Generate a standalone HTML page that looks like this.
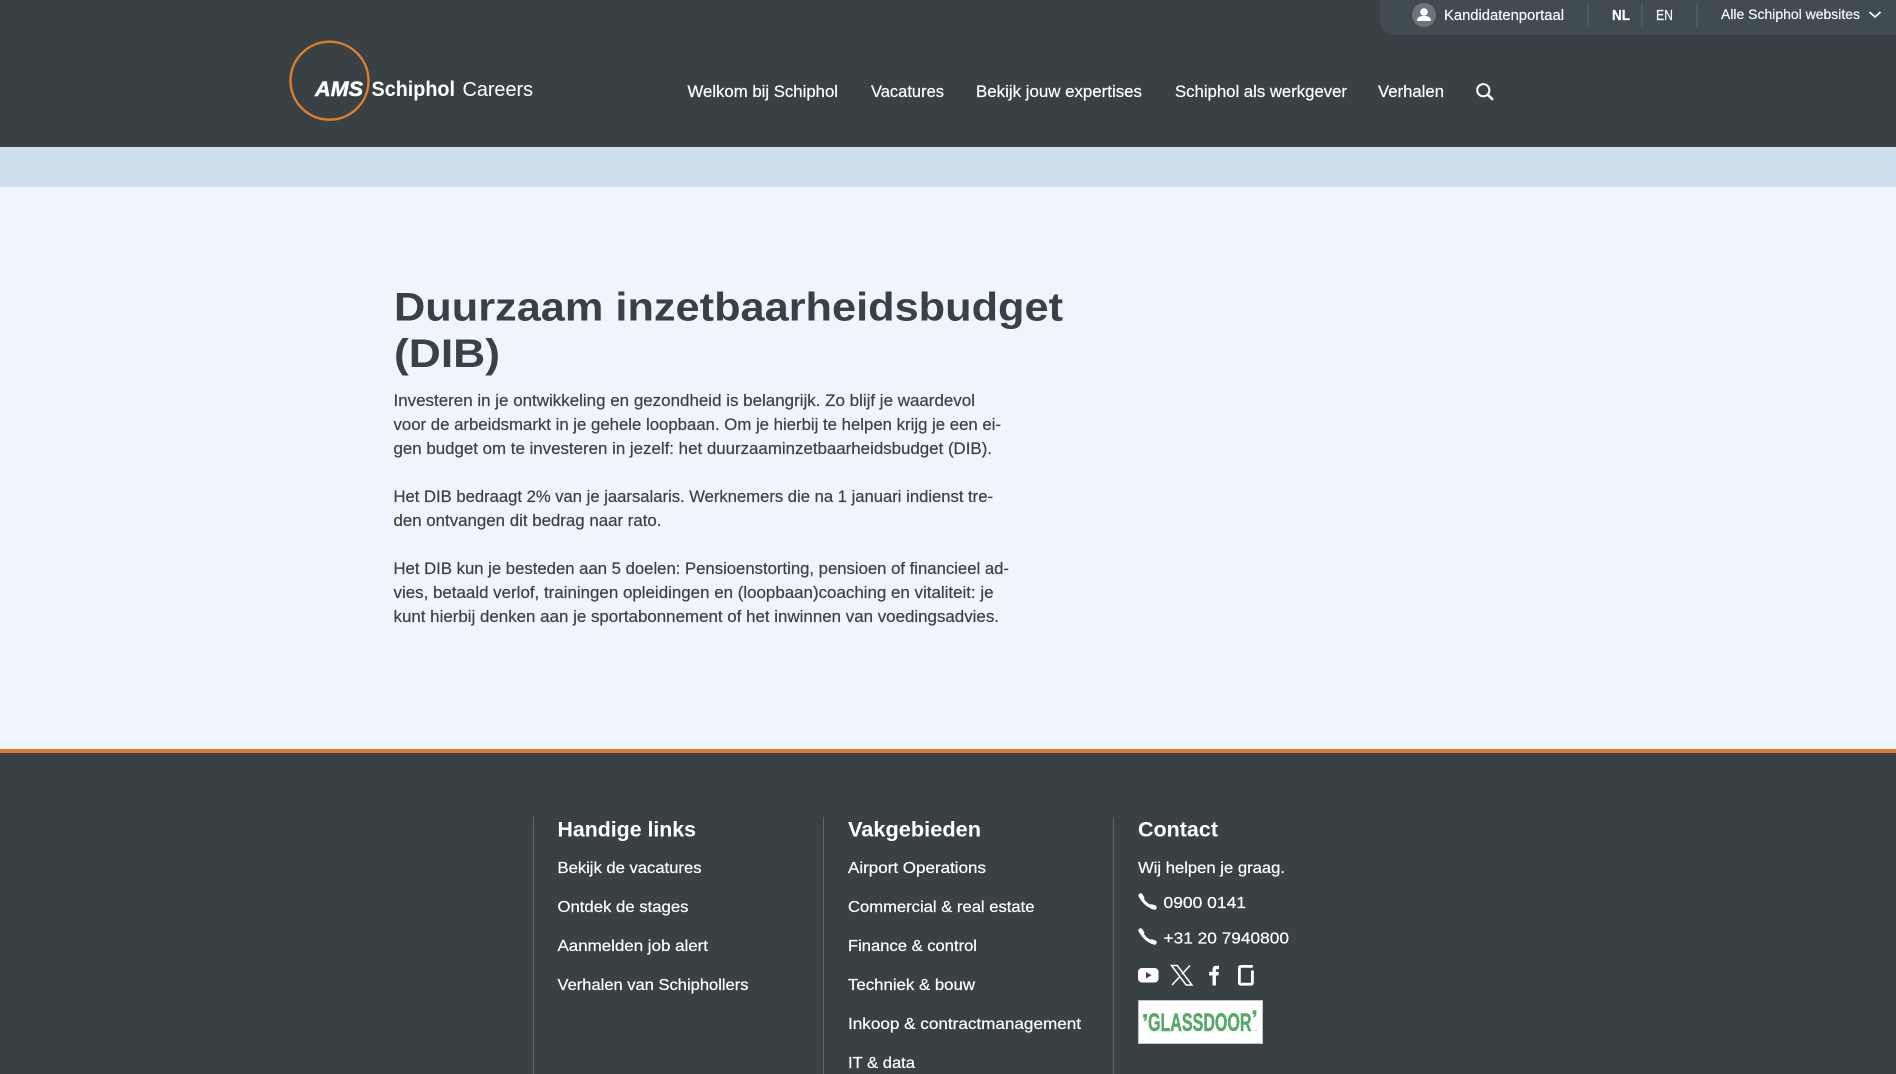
<!DOCTYPE html>
<html lang="nl">
<head>
<meta charset="utf-8">
<title>Duurzaam inzetbaarheidsbudget (DIB) - Schiphol Careers</title>
<style>
html,body{margin:0;padding:0;width:1896px;height:1074px;overflow:hidden;background:#f0f5fc}
body{position:relative;font-family:"Liberation Sans",sans-serif}
.b{position:absolute;left:0;width:1896px}
svg.o{position:absolute;left:0;top:0}
text{font-family:"Liberation Sans",sans-serif}
.n{font-size:16.5px;fill:#fff;stroke:#fff;stroke-width:.2px}
.t{font-size:14.5px;fill:#fff;stroke:#fff;stroke-width:.15px}
.p{font-size:16.5px;fill:#394145;stroke:#394145;stroke-width:.2px}
.h{font-size:40px;font-weight:700;fill:#394145}
.f{font-size:16px;fill:#fff;stroke:#fff;stroke-width:.2px}
.ft{font-size:21px;font-weight:700;fill:#fff}
</style>
</head>
<body>
<div class="b" style="top:0;height:147px;background:#394145"></div>
<div class="b" style="top:147px;height:40px;background:#cfdfee"></div>
<div class="b" style="top:749px;height:4px;background:#dd7e2e"></div>
<div class="b" style="top:753px;height:321px;background:#394145"></div>
<div style="position:absolute;left:1380px;top:0;width:516px;height:35px;background:#414c52;border-bottom-left-radius:14px"></div>

<svg class="o" width="1896" height="1074" viewBox="0 0 1896 1074" xmlns="http://www.w3.org/2000/svg">
  <!-- top bar -->
  <circle cx="1424" cy="15" r="12" fill="#6b7478"/>
  <circle cx="1424" cy="12" r="3.8" fill="#fff"/>
  <path d="M1417 21c0-4 3-5 7-5s7 1 7 5z" fill="#fff"/>
  <text class="t" x="1444" y="20" textLength="120" lengthAdjust="spacingAndGlyphs">Kandidatenportaal</text>
  <path d="M1588 3v24M1642 3v24M1697 3v24" stroke="#5c676c" stroke-width="1"/>
  <text class="t" x="1612" y="20" textLength="18" lengthAdjust="spacingAndGlyphs" style="font-weight:700">NL</text>
  <text class="t" x="1656" y="20" textLength="17" lengthAdjust="spacingAndGlyphs" style="font-size:15px">EN</text>
  <text class="t" x="1721" y="19" style="font-size:14px" textLength="139" lengthAdjust="spacingAndGlyphs">Alle Schiphol websites</text>
  <path d="M1869.5 12l5.5 5 5.5-5" fill="none" stroke="#fff" stroke-width="1.7"/>

  <!-- logo -->
  <circle cx="329.5" cy="80.7" r="39" fill="none" stroke="#dd7e2e" stroke-width="2.4"/>
  <text x="315" y="96" textLength="48" lengthAdjust="spacingAndGlyphs" style="font-size:21px;font-weight:700;font-style:italic;fill:#fff;stroke:#fff;stroke-width:.5px">AMS</text>
  <text x="371.5" y="96" textLength="83.5" lengthAdjust="spacingAndGlyphs" style="font-size:21px;font-weight:700;fill:#fff">Schiphol</text>
  <text x="462.5" y="96" textLength="70.5" lengthAdjust="spacingAndGlyphs" style="font-size:20.5px;fill:#fff">Careers</text>

  <!-- nav -->
  <text class="n" x="687.5" y="97" textLength="150.5" lengthAdjust="spacingAndGlyphs">Welkom bij Schiphol</text>
  <text class="n" x="871" y="97" textLength="73" lengthAdjust="spacingAndGlyphs">Vacatures</text>
  <text class="n" x="976" y="97" textLength="166" lengthAdjust="spacingAndGlyphs">Bekijk jouw expertises</text>
  <text class="n" x="1175" y="97" textLength="172" lengthAdjust="spacingAndGlyphs">Schiphol als werkgever</text>
  <text class="n" x="1378" y="97" textLength="66" lengthAdjust="spacingAndGlyphs">Verhalen</text>
  <circle cx="1483.3" cy="90.2" r="6.1" fill="none" stroke="#fff" stroke-width="2"/>
  <path d="M1487.8 94.8l4.4 4.2" stroke="#fff" stroke-width="2.6" stroke-linecap="round"/>

  <!-- main -->
  <text class="h" x="394" y="320.5" textLength="669" lengthAdjust="spacingAndGlyphs">Duurzaam inzetbaarheidsbudget</text>
  <text class="h" x="394" y="367" textLength="106" lengthAdjust="spacingAndGlyphs">(DIB)</text>

  <text class="p" x="393.5" y="406" textLength="581.5" lengthAdjust="spacingAndGlyphs">Investeren in je ontwikkeling en gezondheid is belangrijk. Zo blijf je waardevol</text>
  <text class="p" x="393.5" y="430" textLength="607.5" lengthAdjust="spacingAndGlyphs">voor de arbeidsmarkt in je gehele loopbaan. Om je hierbij te helpen krijg je een ei-</text>
  <text class="p" x="393.5" y="454" textLength="598.5" lengthAdjust="spacingAndGlyphs">gen budget om te investeren in jezelf: het duurzaaminzetbaarheidsbudget (DIB).</text>

  <text class="p" x="393.5" y="502" textLength="599.5" lengthAdjust="spacingAndGlyphs">Het DIB bedraagt 2% van je jaarsalaris. Werknemers die na 1 januari indienst tre-</text>
  <text class="p" x="393.5" y="526" textLength="268" lengthAdjust="spacingAndGlyphs">den ontvangen dit bedrag naar rato.</text>

  <text class="p" x="393.5" y="574" textLength="615.5" lengthAdjust="spacingAndGlyphs">Het DIB kun je besteden aan 5 doelen: Pensioenstorting, pensioen of financieel ad-</text>
  <text class="p" x="393.5" y="598" textLength="600" lengthAdjust="spacingAndGlyphs">vies, betaald verlof, trainingen opleidingen en (loopbaan)coaching en vitaliteit: je</text>
  <text class="p" x="393.5" y="622" textLength="605.5" lengthAdjust="spacingAndGlyphs">kunt hierbij denken aan je sportabonnement of het inwinnen van voedingsadvies.</text>

  <!-- footer -->
  <path d="M533.5 817v257M823.5 817v257M1113.5 817v257" stroke="#5c676c" stroke-width="1"/>
  <text class="ft" x="557.5" y="836.5" textLength="138.5" lengthAdjust="spacingAndGlyphs">Handige links</text>
  <text class="ft" x="848" y="836.5" textLength="133" lengthAdjust="spacingAndGlyphs">Vakgebieden</text>
  <text class="ft" x="1138" y="836.5" textLength="80" lengthAdjust="spacingAndGlyphs">Contact</text>

  <text class="f" x="557.5" y="873" textLength="144" lengthAdjust="spacingAndGlyphs">Bekijk de vacatures</text>
  <text class="f" x="557.5" y="912" textLength="131" lengthAdjust="spacingAndGlyphs">Ontdek de stages</text>
  <text class="f" x="557.5" y="951" textLength="150.5" lengthAdjust="spacingAndGlyphs">Aanmelden job alert</text>
  <text class="f" x="557.5" y="990" textLength="191" lengthAdjust="spacingAndGlyphs">Verhalen van Schiphollers</text>

  <text class="f" x="848" y="873" textLength="138" lengthAdjust="spacingAndGlyphs">Airport Operations</text>
  <text class="f" x="848" y="912" textLength="186.5" lengthAdjust="spacingAndGlyphs">Commercial &amp; real estate</text>
  <text class="f" x="848" y="951" textLength="129" lengthAdjust="spacingAndGlyphs">Finance &amp; control</text>
  <text class="f" x="848" y="990" textLength="127" lengthAdjust="spacingAndGlyphs">Techniek &amp; bouw</text>
  <text class="f" x="848" y="1029" textLength="233" lengthAdjust="spacingAndGlyphs">Inkoop &amp; contractmanagement</text>
  <text class="f" x="848" y="1068" textLength="67" lengthAdjust="spacingAndGlyphs">IT &amp; data</text>

  <text class="f" x="1138" y="873" textLength="147" lengthAdjust="spacingAndGlyphs">Wij helpen je graag.</text>
  <g fill="none" stroke="#fff" stroke-linecap="round">
    <path d="M1141 896.5c1.5 4.5 6 9 11 10.5" stroke-width="3"/>
    <path d="M1140.6 895.5l1.6 2.6M1151.5 906.5l3 1" stroke-width="4.4"/>
    <path d="M1141 931.5c1.5 4.5 6 9 11 10.5" stroke-width="3"/>
    <path d="M1140.6 930.5l1.6 2.6M1151.5 941.5l3 1" stroke-width="4.4"/>
  </g>
  <text class="f" x="1163.5" y="908" textLength="82.5" lengthAdjust="spacingAndGlyphs">0900 0141</text>
  <text class="f" x="1163.5" y="943.5" textLength="125.5" lengthAdjust="spacingAndGlyphs">+31 20 7940800</text>

  <!-- social -->
  <rect x="1138" y="968" width="20.5" height="14.5" rx="4" fill="#fff"/>
  <path d="M1146 972l5.5 3.2-5.5 3.2z" fill="#394145"/>
  <path d="M1171.5 965.5h5.8l14.6 19.5h-5.8zM1190 965.5l-8 8.6M1180 976.5l-8 8.5" fill="none" stroke="#fff" stroke-width="1.5"/>
  <path d="M1212.5 985.5v-10h-3.4v-3.6h3.4v-2.4c0-2.6 1.6-3.8 3.7-3.8h2.8v3.4h-1.7c-1 0-1.4.5-1.4 1.3v1.5h3l-.5 3.6h-2.5v10z" fill="#fff"/>
  <path d="M1252.8 966.4H1241q-1.6 0-1.6 1.6v14.6q0 1.6 1.6 1.6h10q1.4 0 1.4-1.4V970.5" fill="none" stroke="#fff" stroke-width="2.8"/>

  <!-- glassdoor -->
  <rect x="1138.5" y="1000.5" width="124" height="43" fill="#fff" stroke="#bfc4c6" stroke-width="1"/>
  <text x="1148" y="1031" textLength="103.5" lengthAdjust="spacingAndGlyphs" style="font-size:25px;font-weight:700;fill:#57a869;stroke:#57a869;stroke-width:.5px">GLASSDOOR</text>
  <path d="M1143.2 1014h3.8v3.5q0 2.8-2.6 3.8l-.8-1.2q1.2-.7 1.3-2.1h-1.7z" fill="#57a869"/>
  <path d="M1252.6 1010.2h3.8v3.5q0 2.8-2.6 3.8l-.8-1.2q1.2-.7 1.3-2.1h-1.7z" fill="#57a869"/>
  <rect x="1255" y="1030" width="2" height="1" fill="#9cc9a6"/>
</svg>
</body>
</html>
